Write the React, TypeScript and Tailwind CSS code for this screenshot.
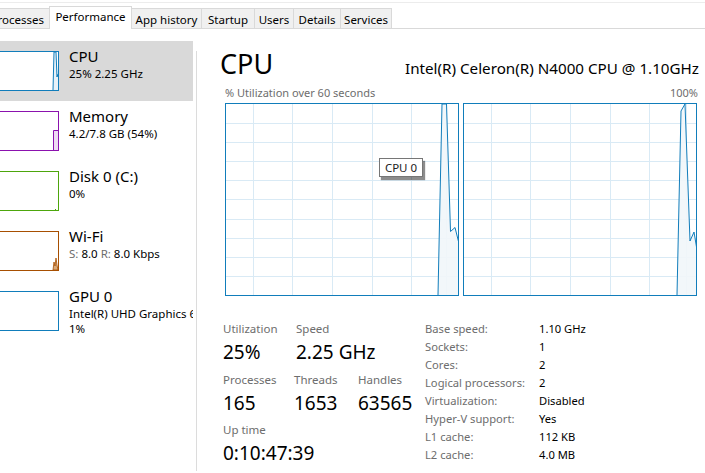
import React from 'react'

const tabs = [
  { label: 'Processes', w: 'w-[49px]' },
  { label: 'Performance', w: 'w-[83px]', active: true },
  { label: 'App history', w: 'w-[70px]' },
  { label: 'Startup', w: 'w-[53px]' },
  { label: 'Users', w: 'w-[39px]' },
  { label: 'Details', w: 'w-[47px]' },
  { label: 'Services', w: 'w-[51px]' },
]

function Tabs() {
  return (
    <div>
      <div className="h-[2px] bg-white" />
      <div className="h-[1px] bg-[#ececec]" />
      <div className="flex h-[26px] items-end border-b border-[#d9d9d9] text-[11.5px] text-black">
        {tabs.map((t) =>
          t.active ? (
            <div
              key={t.label}
              className={`${t.w} relative z-10 -mb-px flex h-[23px] shrink-0 justify-center border-x border-t border-[#d9d9d9] bg-white pt-[2px] leading-[16px]`}
            >
              {t.label}
            </div>
          ) : t.label === 'Processes' ? (
            <div
              key={t.label}
              className={`${t.w} flex h-[20px] shrink-0 justify-end overflow-hidden border-t border-[#d9d9d9] bg-[#f0f0f0] pr-[5px] pt-[3px] leading-[16px] whitespace-nowrap`}
            >
              <span className="shrink-0">Processes</span>
            </div>
          ) : (
            <div
              key={t.label}
              className={`${t.w} flex h-[20px] shrink-0 justify-center border-t border-r border-[#d9d9d9] bg-[#f0f0f0] pt-[3px] leading-[16px] whitespace-nowrap`}
            >
              {t.label}
            </div>
          ),
        )}
      </div>
    </div>
  )
}

type Item = {
  title: string
  lines: React.ReactNode[]
  border: string
  graph: React.ReactNode
  selected?: boolean
}

const items: Item[] = [
  {
    title: 'CPU',
    lines: ['25%  2.25 GHz'],
    border: 'border-[#117dbb]',
    selected: true,
    graph: (
      <svg width="58" height="38" className="block">
        <polygon points="53,38 54,0 56,0 57,25 58,22 58,38" fill="#e8f2f9" />
        <polyline points="53,38 54,0 56,0 57,25 58,22" fill="none" stroke="#117dbb" strokeWidth="1" />
      </svg>
    ),
  },
  {
    title: 'Memory',
    lines: ['4.2/7.8 GB (54%)'],
    border: 'border-[#8b12ae]',
    graph: (
      <svg width="58" height="38" className="block">
        <rect x="53.5" y="18" width="5" height="20" fill="#eedcf3" />
        <polyline points="53.5,38 53.5,18.5 58,18.5" fill="none" stroke="#8b12ae" strokeWidth="1" />
      </svg>
    ),
  },
  {
    title: 'Disk 0 (C:)',
    lines: ['0%'],
    border: 'border-[#4da60c]',
    graph: (
      <svg width="58" height="38" className="block">
        <rect x="55" y="37" width="1" height="1" fill="#4da60c" />
      </svg>
    ),
  },
  {
    title: 'Wi-Fi',
    lines: [
      <>
        <span className="text-[#6d6d6d]">S:</span> 8.0 <span className="text-[#6d6d6d]">R:</span> 8.0 Kbps
      </>,
    ],
    border: 'border-[#a74f01]',
    graph: (
      <svg width="58" height="38" className="block">
        <polygon points="53,38 54,30 55,34 56,26 57,33 58,38" fill="#d8a878" stroke="#a74f01" strokeWidth="0.8" />
      </svg>
    ),
  },
  {
    title: 'GPU 0',
    lines: ['Intel(R) UHD Graphics 600', '1%'],
    border: 'border-[#117dbb]',
    graph: <svg width="58" height="38" className="block" />,
  },
]

function Sidebar() {
  return (
    <div className="w-[193px] shrink-0 overflow-hidden pt-[12px]">
      {items.map((it) => (
        <div
          key={it.title}
          className={`flex h-[60px] whitespace-nowrap ${it.selected ? 'bg-[#d9d9d9]' : ''}`}
        >
          <div className={`mt-[10px] h-[40px] w-[59px] shrink-0 border-y border-r bg-white ${it.border}`}>
            {it.graph}
          </div>
          <div className="ml-[10px] pt-[6px] text-black">
            <div className="text-[15px] leading-[19px]">{it.title}</div>
            {it.lines.map((l, i) => (
              <div key={i} className="text-[11.5px] leading-[15px]">
                {l}
              </div>
            ))}
          </div>
        </div>
      ))}
    </div>
  )
}

const vLinesL = [27, 66, 106, 146, 185, 220]
const vLinesR = [27, 66, 106, 146, 185, 222]
const hLines = [19, 38, 57, 76, 95, 115, 134, 153, 172]

function Chart({ points, vLines, children }: { points: string; vLines: number[]; children?: React.ReactNode }) {
  return (
    <div className="relative h-[193px] w-[234px] shrink-0 border border-[#117dbb] bg-white">
      <svg width="232" height="191" className="block">
        {vLines.map((x) => (
          <line key={'v' + x} x1={x + 0.5} y1="0" x2={x + 0.5} y2="191" stroke="#d9eaf5" strokeWidth="1" />
        ))}
        {hLines.map((y) => (
          <line key={'h' + y} x1="0" y1={y + 0.5} x2="232" y2={y + 0.5} stroke="#d9eaf5" strokeWidth="1" />
        ))}
        <polygon points={points + ' 232,191'} fill="#f1f6fa" fillOpacity="0.9" />
        <polyline points={points} fill="none" stroke="#117dbb" strokeWidth="1" />
      </svg>
      {children}
    </div>
  )
}

function Stat({ label, value }: { label: string; value: string }) {
  return (
    <div>
      <div className="h-[19px] text-[11.5px] leading-[18px] text-[#6d6d6d]">{label}</div>
      <div className="h-[26px] text-[19px] leading-[26px] text-black">{value}</div>
    </div>
  )
}

const specs = [
  ['Base speed:', '1.10 GHz'],
  ['Sockets:', '1'],
  ['Cores:', '2'],
  ['Logical processors:', '2'],
  ['Virtualization:', 'Disabled'],
  ['Hyper-V support:', 'Yes'],
  ['L1 cache:', '112 KB'],
  ['L2 cache:', '4.0 MB'],
]

function Main() {
  return (
    <div className="min-w-0 flex-1 pl-[28px] pr-[8px]">
      <div className="mt-[21px] flex h-[28px] items-baseline justify-between">
        <div className="-ml-[5px] text-[27px] leading-none text-black">CPU</div>
        <div className="-mr-[2px] text-[15.2px] leading-none whitespace-nowrap text-black">
          Intel(R) Celeron(R) N4000 CPU @ 1.10GHz
        </div>
      </div>
      <div className="mt-[8px] flex h-[14px] justify-between text-[11px] leading-[14px] text-[#6d6d6d]">
        <span>% Utilization over 60 seconds</span>
        <span className="-mr-[1px]">100%</span>
      </div>
      <div className="mt-[3px] flex gap-[4px]">
        <Chart points="212,191 216,0 220.5,0 224.5,127.5 229,123.5 232.5,137.5" vLines={vLinesL}>
          <div className="absolute left-[153px] top-[54px] flex h-[19px] w-[44px] items-center justify-center border border-[#767676] bg-white text-[11.5px] text-[#222] shadow-[2px_3px_1px_rgba(0,0,0,0.45)]">
            CPU 0
          </div>
        </Chart>
        <Chart points="213,191 217,7 221,0 226,137 230,128 233,146" vLines={vLinesR} />
      </div>
      <div className="mt-[24px] flex">
        <div className="-ml-[2px] w-[202px] shrink-0">
          <div className="flex">
            <div className="w-[73px]">
              <Stat label="Utilization" value="25%" />
            </div>
            <Stat label="Speed" value="2.25 GHz" />
          </div>
          <div className="mt-[6px] flex">
            <div className="w-[71px]">
              <Stat label="Processes" value="165" />
            </div>
            <div className="w-[64px]">
              <Stat label="Threads" value="1653" />
            </div>
            <Stat label="Handles" value="63565" />
          </div>
          <div className="mt-[5px]">
            <Stat label="Up time" value="0:10:47:39" />
          </div>
        </div>
        <div className="text-[11.2px] leading-[18px]">
          {specs.map(([k, v]) => (
            <div key={k} className="flex h-[18px]">
              <div className="w-[114px] shrink-0 text-[#6d6d6d]">{k}</div>
              <div className="text-black">{v}</div>
            </div>
          ))}
        </div>
      </div>
    </div>
  )
}

export default function App() {
  return (
    <div className="h-[473px] w-[705px] overflow-hidden bg-white font-['Noto_Sans',sans-serif]">
      <Tabs />
      <div className="flex">
        <Sidebar />
        <div className="w-[3px] shrink-0" />
        <div className="mt-[22px] h-[420px] w-px shrink-0 bg-[#dcdcdc]" />
        <Main />
      </div>
    </div>
  )
}
